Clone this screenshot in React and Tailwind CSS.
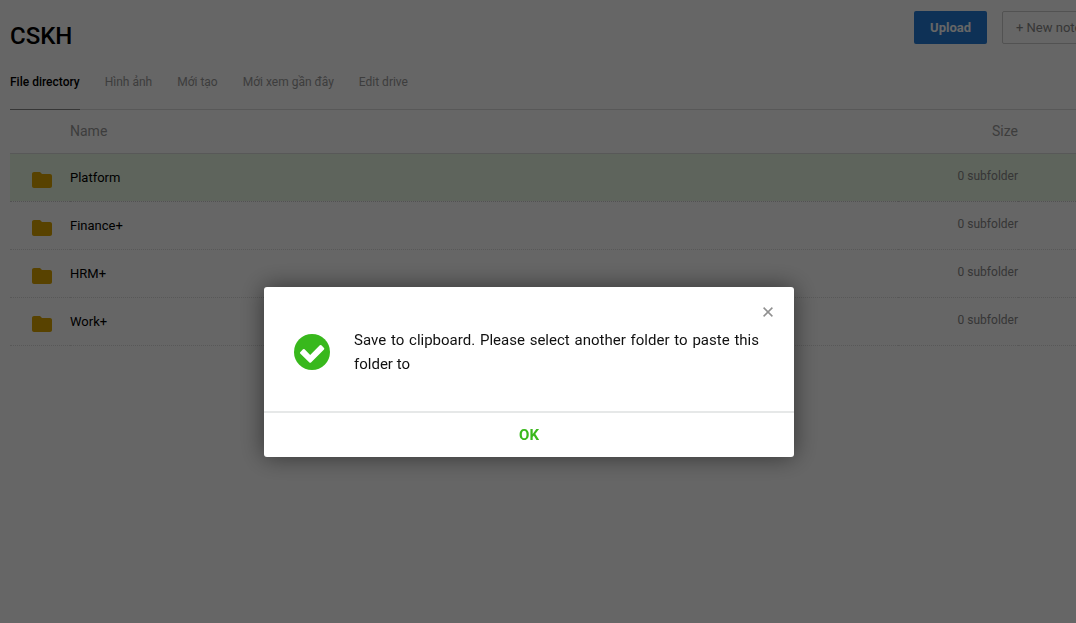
import { useState } from 'react';

const tabs = ['File directory', 'Hình ảnh', 'Mới tạo', 'Mới xem gần đây', 'Edit drive'];

const folders = [
  { id: 1, name: 'Platform', size: '0 subfolder' },
  { id: 2, name: 'Finance+', size: '0 subfolder' },
  { id: 3, name: 'HRM+', size: '0 subfolder' },
  { id: 4, name: 'Work+', size: '0 subfolder' },
];

const FolderIcon = () => (
  <svg viewBox="0 0 24 24" className="h-6 w-6" fill="#dca500" aria-hidden="true">
    <path d="M10 4H4c-1.1 0-1.99.9-1.99 2L2 18c0 1.1.9 2 2 2h16c1.1 0 2-.9 2-2V8c0-1.1-.9-2-2-2h-8l-2-2z" />
  </svg>
);

const CheckIcon = () => (
  <svg viewBox="0 0 36 36" className="h-9 w-9 shrink-0" aria-hidden="true">
    <circle cx="18" cy="18" r="18" fill="#38b81c" />
    <path
      d="M6.2 18.2 9 15.3q.8-.7 1.6 0L16.2 20.9 25.8 11.3q.8-.7 1.6 0L30 14q.7.8 0 1.6L17 28.4q-.8.7-1.6 0L6.2 19.4q-.5-.6 0-1.2z"
      fill="#fff"
    />
  </svg>
);

const CloseIcon = () => (
  <svg viewBox="0 0 10 10" className="h-[10px] w-[10px]" aria-hidden="true">
    <path d="M.6.6 9.4 9.4M9.4.6.6 9.4" stroke="#909090" strokeWidth="1.5" fill="none" />
  </svg>
);

const ClipboardDialog = ({ onClose }) => (
  <div className="fixed inset-0 flex items-start justify-center bg-black/60 pt-[287px] pr-[18px]">
    <div
      role="dialog"
      aria-modal="true"
      aria-labelledby="dialog-message"
      className="w-[530px] max-w-full rounded-[3px] bg-white shadow-[0_0_24px_rgba(0,0,0,0.5)]"
    >
      <div className="flex justify-end pt-5 pr-[21px] pb-[11px]">
        <button type="button" aria-label="Close" onClick={onClose} className="block">
          <CloseIcon />
        </button>
      </div>
      <div className="flex items-center gap-6 pr-[35px] pb-[35px] pl-[30px]">
        <CheckIcon />
        <p id="dialog-message" className="text-justify text-[15px] leading-6 text-[#111]">
          Save to clipboard. Please select another folder to paste this folder to
        </p>
      </div>
      <button
        type="button"
        onClick={onClose}
        className="h-[46px] w-full border-t-2 border-[#e6e8e8] text-[15px] font-bold text-[#3ab81c]"
      >
        OK
      </button>
    </div>
  </div>
);

const App = () => {
  const [activeTab, setActiveTab] = useState(tabs[0]);
  const [showDialog, setShowDialog] = useState(true);

  return (
    <div className="min-h-screen overflow-hidden bg-white font-['Roboto',sans-serif] text-black">
      {/* the drive is a bit wider than the window */}
      <div className="-mr-8 pl-[10px]">
        <header className="flex items-start justify-between pt-[11px]">
          <h1 className="pt-[9px] text-2xl font-medium">CSKH</h1>
          <div className="flex gap-[15px] text-[13px] whitespace-nowrap">
            <button type="button" className="h-[33px] rounded-[2px] bg-[#247bd6] px-4 font-bold text-white">
              Upload
            </button>
            <button type="button" className="h-[33px] w-[106px] rounded-[2px] border border-[#ccc] pl-[13px] text-left text-[#888]">
              + New note
            </button>
          </div>
        </header>

        <nav className="flex gap-[25px] border-b border-[#ddd] text-xs whitespace-nowrap">
          {tabs.map((tab) => (
            <button
              key={tab}
              type="button"
              onClick={() => setActiveTab(tab)}
              className={
                tab === activeTab
                  ? '-mb-px h-[58px] border-b border-[#888] pt-[2px] font-medium text-black'
                  : '-mb-px h-[58px] border-b border-transparent pt-[2px] text-[#999]'
              }
            >
              {tab}
            </button>
          ))}
        </nav>

        <table className="w-full table-fixed border-collapse">
          <thead>
            <tr className="h-[43px] border-b border-[#ddd] text-sm text-[#999]">
              <th className="w-[60px]" aria-label="Type"></th>
              <th className="text-left font-normal">Name</th>
              <th className="w-[120px] text-right font-normal">Size</th>
              <th className="w-[90px]" aria-label="Actions"></th>
            </tr>
          </thead>
          <tbody>
            {folders.map((folder, index) => (
              <tr
                key={folder.id}
                className={
                  index === 0
                    ? 'h-12 border-b border-dotted border-[#ccc] bg-[#ebfae6]'
                    : 'h-12 border-b border-dotted border-[#ddd]'
                }
              >
                <td className="pt-[6px] pl-5">
                  <FolderIcon />
                </td>
                <td className="pt-[2px] text-[13px]">{folder.name}</td>
                <td className="pb-[2px] text-right text-xs text-[#888]">{folder.size}</td>
                <td></td>
              </tr>
            ))}
          </tbody>
        </table>
      </div>

      {showDialog && <ClipboardDialog onClose={() => setShowDialog(false)} />}
    </div>
  );
};

export default App;
